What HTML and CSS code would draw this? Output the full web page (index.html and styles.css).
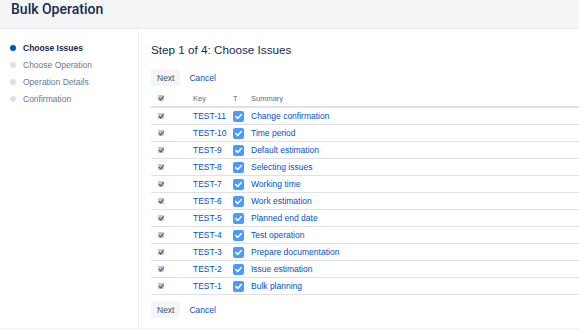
FILE: index.html
```html
<!DOCTYPE html>
<html lang="en">
<head>
    <meta charset="UTF-8">
    <title>Bulk Operation</title>
    <link rel="stylesheet" href="styles.css">
</head>
<body>
    <header class="page-header">
        <h1>Bulk Operation</h1>
    </header>

    <div class="page-body">
        <nav class="steps">
            <div class="step current"><span class="dot"></span>Choose Issues</div>
            <div class="step"><span class="dot"></span>Choose Operation</div>
            <div class="step"><span class="dot"></span>Operation Details</div>
            <div class="step"><span class="dot"></span>Confirmation</div>
        </nav>

        <main class="content">
            <h2>Step 1 of 4: Choose Issues</h2>

            <div class="actions">
                <button class="btn">Next</button>
                <a class="link" href="#">Cancel</a>
            </div>

            <table class="issues">
                <thead>
                    <tr>
                        <th class="col-check"><span class="box"></span></th>
                        <th class="col-key">Key</th>
                        <th class="col-type">T</th>
                        <th>Summary</th>
                    </tr>
                </thead>
                <tbody id="rows"></tbody>
            </table>

            <div class="actions bottom">
                <button class="btn">Next</button>
                <a class="link" href="#">Cancel</a>
            </div>
        </main>
    </div>

    <footer class="page-footer"></footer>

    <script>
        const issues = [
            ['TEST-11', 'Change confirmation'],
            ['TEST-10', 'Time period'],
            ['TEST-9', 'Default estimation'],
            ['TEST-8', 'Selecting issues'],
            ['TEST-7', 'Working time'],
            ['TEST-6', 'Work estimation'],
            ['TEST-5', 'Planned end date'],
            ['TEST-4', 'Test operation'],
            ['TEST-3', 'Prepare documentation'],
            ['TEST-2', 'Issue estimation'],
            ['TEST-1', 'Bulk planning']
        ];

        const icon = '<svg class="type-icon" viewBox="0 0 11 11" width="11" height="11">' +
            '<rect width="11" height="11" rx="2" fill="#4c9aff"/>' +
            '<path d="M2.8 5.6 L4.7 7.4 L8.3 3.6" fill="none" stroke="#fff" stroke-width="1.5" stroke-linecap="round" stroke-linejoin="round"/>' +
            '</svg>';

        const tbody = document.getElementById('rows');
        issues.forEach(([key, summary]) => {
            const tr = document.createElement('tr');
            tr.innerHTML =
                '<td class="col-check"><span class="box"></span></td>' +
                '<td class="col-key"><a href="#">' + key + '</a></td>' +
                '<td class="col-type">' + icon + '</td>' +
                '<td><a href="#">' + summary + '</a></td>';
            tbody.appendChild(tr);
        });
    </script>
</body>
</html>
```

FILE: styles.css
```css
body {
    margin: 0;
    font-family: "Liberation Sans", Arial, sans-serif;
    color: #172b4d;
    background: #fff;
    height: 330px;
    display: flex;
    flex-direction: column;
    overflow: hidden;
}

.page-header {
    background: #f4f5f7;
    height: 28px;
    border-bottom: 1px solid #ebecf0;
    padding: 0 11px;
}

.page-header h1 {
    margin: 0;
    font-family: Roboto, "Liberation Sans", sans-serif;
    font-size: 14px;
    font-weight: 500;
    line-height: 18px;
    color: #172b4d;
}

.page-body {
    flex: 1;
    display: flex;
}

.steps {
    width: 139px;
    border-right: 1px solid #ebecf0;
    padding-top: 10px;
    box-sizing: border-box;
}

.step {
    display: flex;
    align-items: center;
    height: 17px;
    padding-left: 10px;
    font-size: 8.5px;
    color: #6b778c;
}

.step.current {
    color: #172b4d;
    font-weight: bold;
}

.dot {
    width: 6px;
    height: 6px;
    border-radius: 50%;
    background: #dfe1e6;
    margin-right: 7px;
}

.step.current .dot {
    background: #0052cc;
}

.content {
    flex: 1;
    padding: 12px 0 0 12px;
}

.content h2 {
    margin: 0;
    font-size: 11.7px;
    font-weight: normal;
    line-height: 17px;
    color: #172b4d;
}

.actions {
    display: flex;
    align-items: center;
    margin-top: 11px;
}

.actions.bottom {
    margin-top: 6px;
}

.btn {
    font-family: inherit;
    font-size: 8.5px;
    color: #42526e;
    background: #f4f5f7;
    border: none;
    border-radius: 3px;
    height: 17px;
    padding: 0 6px;
}

.link {
    margin-left: 9px;
    font-size: 8.5px;
    color: #0052cc;
    text-decoration: none;
}

.issues {
    width: 100%;
    border-collapse: collapse;
    margin-top: 3px;
}

.issues th {
    text-align: left;
    font-size: 7.5px;
    font-weight: normal;
    color: #5e6c84;
    height: 16px;
    border-bottom: 2px solid #dfe1e6;
    padding: 1px 0 0;
}

.issues td {
    height: 16px;
    border-bottom: 1px solid #dfe1e6;
    padding: 0;
    font-size: 8.5px;
}

.issues a {
    color: #0052cc;
    text-decoration: none;
}

.col-check {
    width: 35px;
    padding-left: 7px !important;
}

.col-key {
    width: 40px;
}

.col-type {
    width: 18px;
}

.type-icon {
    display: block;
}

.box {
    display: block;
    width: 6px;
    height: 6px;
    border-radius: 1px;
    background: #c1c7d0;
    position: relative;
}

.box::after {
    content: "";
    position: absolute;
    left: 2px;
    top: 0;
    width: 1.5px;
    height: 3.5px;
    border: solid #42526e;
    border-width: 0 1px 1px 0;
    transform: rotate(40deg);
}

.page-footer {
    height: 2px;
    background: #f4f5f7;
}
```
